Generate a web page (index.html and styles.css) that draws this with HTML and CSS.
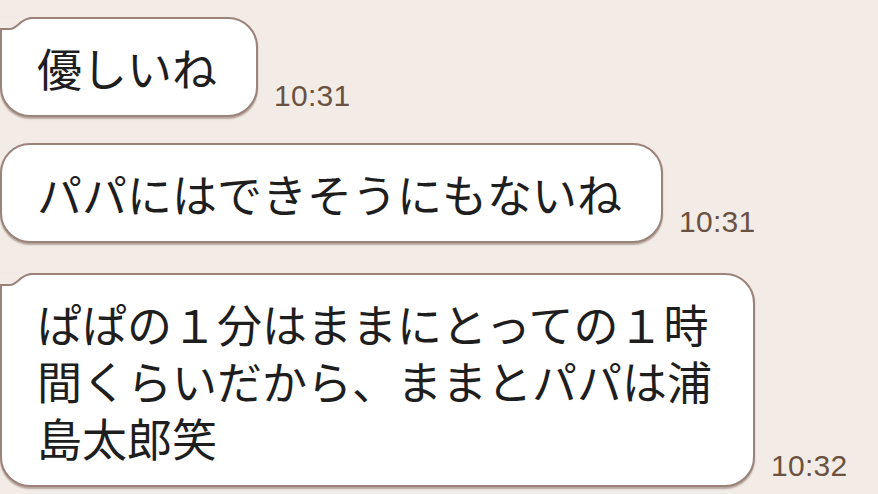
FILE: index.html
```html
<html>
    <head>
        <meta charset="utf-8">
        <title>トーク</title>
        <link rel="stylesheet" href="styles.css">
    </head>
    <body>
        <div class="chat">
            <div class="row">
                <div class="bubble tail">
                    <svg class="tailmark" width="34" height="14" viewBox="0 0 34 14">
                        <path d="M0,0 H32 C22,1 19,11 11,11 H0 Z" fill="#f3ece6"/>
                        <path d="M-1,12 H10 C18,12 20,1 32,1" fill="none" stroke="#9a837a" stroke-width="2"/>
                    </svg>
                    優しいね
                </div>
                <span class="stamp">10:31</span>
            </div>
            <div class="row">
                <div class="bubble">パパにはできそうにもないね</div>
                <span class="stamp">10:31</span>
            </div>
            <div class="row gap">
                <div class="bubble tail">
                    <svg class="tailmark" width="34" height="14" viewBox="0 0 34 14">
                        <path d="M0,0 H32 C22,1 19,11 11,11 H0 Z" fill="#f3ece6"/>
                        <path d="M-1,12 H10 C18,12 20,1 32,1" fill="none" stroke="#9a837a" stroke-width="2"/>
                    </svg>
                    ぱぱの１分はままにとっての１時間くらいだから、ままとパパは浦島太郎笑
                </div>
                <span class="stamp">10:32</span>
            </div>
        </div>
    </body>
</html>
```

FILE: styles.css
```css
body
{
    margin: 0;
    background-color: #f3ece6;
    overflow: hidden;
}

.chat
{
    display: flex;
    flex-direction: column;
    gap: 26px;
    padding-top: 17px;
}

.row
{
    display: flex;
    align-items: flex-end;
}

.row.gap
{
    margin-top: 4px;
}

.bubble
{
    position: relative;
    box-sizing: border-box;
    max-width: 755px;
    padding: 19.5px 39px 19.5px 35px;
    background-color: #fff;
    border: 2px solid #9a837a;
    border-radius: 30px;
    box-shadow: 0 1.5px 1.5px rgba(110, 80, 70, 0.45);
    font-family: "Noto Sans CJK JP", sans-serif;
    font-size: 45px;
    line-height: 57px;
    color: #1e1e1e;
}

.bubble.tail
{
    border-top-left-radius: 0;
}

.tailmark
{
    position: absolute;
    top: -2px;
    left: -2px;
    overflow: visible;
}

.stamp
{
    margin-left: 16px;
    margin-bottom: 6px;
    font-family: "Liberation Sans", Arial, sans-serif;
    font-size: 30px;
    line-height: 30px;
    letter-spacing: 0.3px;
    color: #6a5242;
    white-space: nowrap;
}
```
